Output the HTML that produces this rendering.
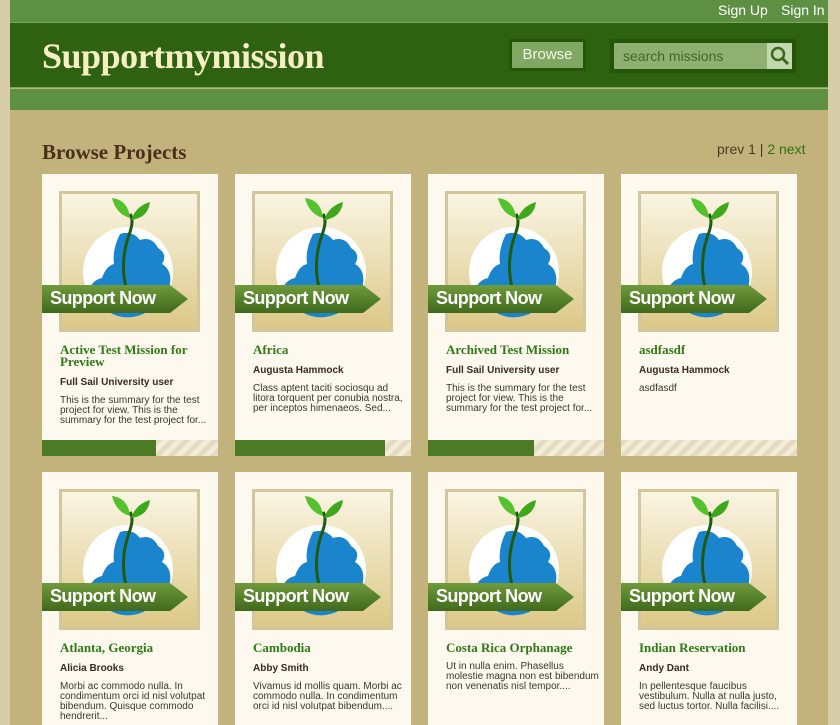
<!DOCTYPE html>
<html style="height:725px;overflow:hidden"><head><style>
*{margin:0;padding:0;box-sizing:border-box}
body{width:840px;height:725px;overflow:hidden;background:#d6cca8;font-family:"Liberation Sans",sans-serif;position:relative}
#wrap{position:absolute;left:10px;top:0;width:818px;height:725px;background:#c2b37c}
#top{position:absolute;left:0;top:0;width:818px;height:22px;background:#5e9044}
#top span{position:absolute;top:2px;color:#fff;font-size:14px}
#hdr{position:absolute;left:0;top:22px;width:818px;height:66px;background:#2f6210;border-top:1px solid #7aa860;border-bottom:1px solid #7aa860}
#sub{position:absolute;left:0;top:89px;width:818px;height:21px;background:#5e9044}
#logo{position:absolute;left:32px;top:12px;font-family:"Liberation Serif",serif;font-weight:bold;font-size:36px;color:#f6efc4;letter-spacing:-0.5px}
#browse{position:absolute;left:499px;top:16px;width:77px;height:32px;background:#255508;padding:3px}
#browse div{background:#7fa862;color:#f4f6e8;font-size:15px;text-align:center;line-height:26px;height:26px}
#search{position:absolute;left:600px;top:16px;width:186px;height:34px;background:#255508;padding:4px}
#search div{background:#8fb071;color:#3b6a1c;font-size:14px;line-height:26px;height:26px;padding-left:9px;position:relative}
#search i{position:absolute;right:0;top:0;width:25px;height:26px;background:#c4d8b0}
h1{position:absolute;left:32px;top:140px;font-family:"Liberation Serif",serif;font-size:21px;color:#4a2f1c}
#pg{position:absolute;left:707px;top:141px;font-size:14px;color:#4a3a25}
#pg b{font-weight:normal;color:#2f7010}
.card{position:absolute;width:176px;height:282px;background:#fdf9ee;overflow:hidden}
.img{position:absolute;left:17px;top:17px;width:141px;height:141px;border:3px solid #d2c69c;background:linear-gradient(#faf5e3,#dcc887);overflow:hidden}
.rib{position:absolute;left:0;top:111px;width:146px;height:28px}
.rib svg{position:absolute;left:0;top:0}
.rib span{position:absolute;left:8px;top:3px;color:#fff;font-weight:bold;font-size:18px;letter-spacing:-0.6px;font-family:"Liberation Sans",sans-serif}
.t{position:absolute;left:18px;top:170px;width:150px;font-family:"Liberation Serif",serif;font-weight:bold;font-size:13px;line-height:12px;color:#2e7a14}
.a{position:absolute;left:18px;font-weight:bold;font-size:10px;color:#3a2a20}
.s{position:absolute;left:18px;width:153px;font-size:10px;line-height:10px;color:#3a3530}
.bar{position:absolute;left:0;top:266px;width:176px;height:16px;background:repeating-linear-gradient(135deg,#e4dbc0 0 5px,#f2ecd9 5px 10px)}
.bar i{display:block;height:16px;background:#4d7a24}
</style></head><body>
<svg width="0" height="0" style="position:absolute">
<defs>
<symbol id="g" viewBox="0 0 135 135">
<circle cx="66" cy="78" r="45" fill="#fff"/>
<path d="M58 40 Q70 36 78 46 Q90 42 96 54 Q106 60 100 70 Q110 76 108 90 Q100 110 86 118 Q70 126 56 122 Q36 116 26 98 Q30 86 40 84 Q44 72 52 70 Q50 56 58 40Z" fill="#1a84cc"/>
<path d="M66 100 Q56 70 68 38 Q72 26 68 20" stroke="#1f5a10" stroke-width="3" fill="none"/>
<ellipse cx="66" cy="102" rx="6" ry="9" fill="#2b5a18"/>
<path d="M68 24 Q54 20 50 4 Q66 6 68 24Z" fill="#54c22c"/>
<path d="M69 26 Q74 12 88 8 Q86 24 69 26Z" fill="#3ea81a"/>
</symbol>
</defs></svg>
<div id="wrap">
<div id="top"><span style="left:708px">Sign Up</span><span style="left:771px">Sign In</span></div>
<div id="hdr"><div id="logo">Supportmymission</div>
<div id="browse"><div>Browse</div></div>
<div id="search"><div>search missions<i><svg width="25" height="26"><circle cx="11" cy="11" r="6" stroke="#3b6a1c" stroke-width="2.5" fill="none"/><path d="M15 15 L21 21" stroke="#3b6a1c" stroke-width="3"/></svg></i></div></div>
</div>
<div id="sub"></div>
<h1>Browse Projects</h1>
<div id="pg">prev 1 | <b>2 next</b></div>
</div>
<div id="cards"></div>
<script>
var d=[["Active Test Mission for Preview","Full Sail University user","This is the summary for the test project for view. This is the summary for the test project for...",114],
["Africa","Augusta Hammock","Class aptent taciti sociosqu ad litora torquent per conubia nostra, per inceptos himenaeos. Sed...",150],
["Archived Test Mission","Full Sail University user","This is the summary for the test project for view. This is the summary for the test project for...",106],
["asdfasdf","Augusta Hammock","asdfasdf",0],
["Atlanta, Georgia","Alicia Brooks","Morbi ac commodo nulla. In condimentum orci id nisl volutpat bibendum. Quisque commodo hendrerit...",0],
["Cambodia","Abby Smith","Vivamus id mollis quam. Morbi ac commodo nulla. In condimentum orci id nisl volutpat bibendum....",0],
["Costa Rica Orphanage","","Ut in nulla enim. Phasellus molestie magna non est bibendum non venenatis nisl tempor....",0],
["Indian Reservation","Andy Dant","In pellentesque faucibus vestibulum. Nulla at nulla justo, sed luctus tortor. Nulla facilisi....",0]];
var xs=[42,235,428,621],h="";
d.forEach(function(c,i){var x=xs[i%4],y=i<4?174:472;var two=c[0].length>24;
var ay=two?203:191;var sy=c[1]?ay+19:ay-1;
h+='<div class="card" style="left:'+x+'px;top:'+y+'px"><div class="img"><svg width="135" height="135"><use href="#g"/></svg></div>'+
'<div class="rib"><svg width="146" height="28"><defs><linearGradient id="r'+i+'" x1="0" y1="0" x2="0" y2="1"><stop offset="0" stop-color="#6f9a3c"/><stop offset="1" stop-color="#3f6a1c"/></linearGradient></defs><path d="M0 0 L128 0 L146 14 L128 28 L0 28Z" fill="url(#r'+i+')"/></svg><span>Support Now</span></div>'+
'<div class="t">'+c[0]+'</div>'+(c[1]?'<div class="a" style="top:'+ay+'px">'+c[1]+'</div>':'')+
'<div class="s" style="top:'+sy+'px">'+c[2]+'</div>'+(i<4?'<div class="bar"><i style="width:'+c[3]+'px"></i></div>':'')+'</div>';});
document.getElementById('cards').innerHTML=h;
</script>
</body></html>
